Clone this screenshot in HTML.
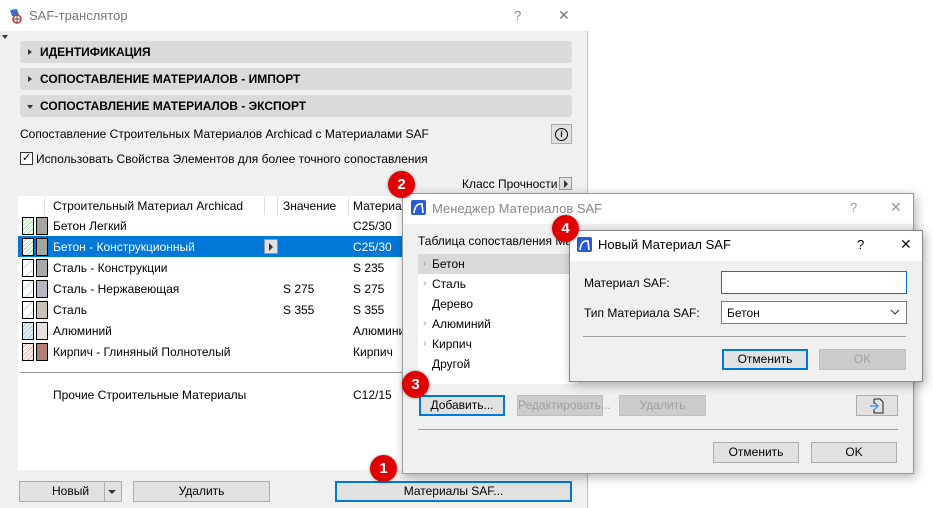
<!DOCTYPE html>
<html><head><meta charset="utf-8">
<style>
*{box-sizing:border-box;margin:0;padding:0}
body{width:933px;height:508px;overflow:hidden;background:#fff;font-family:"Liberation Sans","DejaVu Sans",sans-serif;font-size:12px;color:#000;position:relative}
.a{position:absolute;white-space:nowrap}
.btn{position:absolute;height:21px;background:#e1e1e1;border:1px solid #adadad;text-align:center;line-height:19px;font-size:12px}
.dis{color:#a0a0a0;background:#cccccc;border-color:#bfbfbf}
.blue{border:2px solid #0078d7;line-height:17px}
.sec{position:absolute;left:20px;width:552px;height:22px;background:#dadada;border-radius:3px;font-weight:bold;line-height:22px;padding-left:20px;font-size:12px}
.sec i{position:absolute;left:8px;top:8px;width:0;height:0;border-left:4px solid #333;border-top:3px solid transparent;border-bottom:3px solid transparent}
.sec i.d{left:7px;top:10px;border-top:4px solid #333;border-left:3px solid transparent;border-right:3px solid transparent;border-bottom:0}
.sw1{position:absolute;left:22px;width:12px;height:18px;border:1px solid #000}
.sw2{position:absolute;left:36px;width:12px;height:18px;border:1px solid #000}
.num{position:absolute;width:27px;height:27px;border-radius:50%;background:#e00000;color:#fff;font-weight:bold;font-size:15px;text-align:center;line-height:27px;box-shadow:0 0 3px rgba(0,0,0,.4)}
.li{position:absolute;left:432px}
.chev{position:absolute;left:423px;color:#999;font-size:10px}
.x{position:absolute;font-size:14px;color:#777}
</style></head><body>
<div class="a" style="left:0;top:0;width:588px;height:508px;background:#f0f0f0;border-right:1px solid #bdbdbd"></div>
<div class="a" style="left:0;top:0;width:588px;height:31px;background:#fff"></div>
<svg class="a" style="left:7px;top:7px" width="18" height="18" viewBox="0 0 18 18"><path d="M3 3 L10 2 L12 8 L5 9Z" fill="#3a6fc9"/><circle cx="10" cy="12" r="4" fill="none" stroke="#c33" stroke-width="1.5"/><path d="M6 12h8M10 8v8" stroke="#555"/></svg>
<div class="a" style="left:29px;top:8px;font-size:13px;color:#777">SAF-транслятор</div>
<div class="a" style="left:514px;top:8px;font-size:13px;color:#888">?</div>
<div class="x" style="left:558px;top:7px">✕</div>
<div class="a" style="left:2px;top:35px;border-top:4px solid #333;border-left:3px solid transparent;border-right:3px solid transparent"></div>
<div class="sec" style="top:41px"><i></i>ИДЕНТИФИКАЦИЯ</div>
<div class="sec" style="top:68px"><i></i>СОПОСТАВЛЕНИЕ МАТЕРИАЛОВ - ИМПОРТ</div>
<div class="sec" style="top:95px"><i class="d"></i>СОПОСТАВЛЕНИЕ МАТЕРИАЛОВ - ЭКСПОРТ</div>
<div class="a" style="left:20px;top:127px">Сопоставление Строительных Материалов Archicad с Материалами SAF</div>
<div class="a" style="left:551px;top:124px;width:21px;height:20px;border:1px solid #adadad;background:#e1e1e1;text-align:center"><span style="display:inline-block;margin-top:3px;width:13px;height:13px;border:1px solid #000;border-radius:50%;font-size:9px;line-height:11px;font-weight:bold">i</span></div>
<div class="a" style="left:20px;top:152px;width:13px;height:13px;border:1px solid #333;background:#fff;font-size:11px;line-height:11px;text-align:center">✓</div>
<div class="a" style="left:36px;top:152px">Использовать Свойства Элементов для более точного сопоставления</div>
<div class="a" style="left:462px;top:177px">Класс Прочности</div>
<div class="a" style="left:559px;top:177px;width:13px;height:13px;border:1px solid #999;background:#e1e1e1"><div class="a" style="left:4px;top:2px;border-left:4px solid #333;border-top:4px solid transparent;border-bottom:4px solid transparent"></div></div>
<div class="a" style="left:18px;top:196px;width:390px;height:274px;background:#fff"></div>
<div class="a" style="left:44px;top:197px;width:1px;height:18px;background:#ddd"></div>
<div class="a" style="left:264px;top:197px;width:1px;height:18px;background:#ddd"></div>
<div class="a" style="left:277px;top:197px;width:1px;height:18px;background:#ddd"></div>
<div class="a" style="left:348px;top:197px;width:1px;height:18px;background:#ddd"></div>
<div class="a" style="left:53px;top:199px">Строительный Материал Archicad</div>
<div class="a" style="left:283px;top:199px">Значение</div>
<div class="a" style="left:353px;top:199px">Материал</div>
<div class="a" style="left:18px;top:236px;width:390px;height:21px;background:#0078d7"></div>
<div class="a" style="left:264px;top:239px;width:14px;height:15px;border:1px solid #999;background:#e1e1e1"><div class="a" style="left:4px;top:3px;border-left:4px solid #333;border-top:4px solid transparent;border-bottom:4px solid transparent"></div></div>

<div class="sw1" style="top:217px;background:repeating-linear-gradient(135deg,#fff 0 2px,#9d9 2px 3px)"></div><div class="sw2" style="top:217px;background:#a5a5a0"></div>
<div class="a" style="left:53px;top:219px">Бетон Легкий</div><div class="a" style="left:353px;top:219px">C25/30</div>
<div class="sw1" style="top:238px;background:repeating-linear-gradient(135deg,#fff 0 2px,#9d9 2px 3px)"></div><div class="sw2" style="top:238px;background:#a5a5a0"></div>
<div class="a" style="left:53px;top:240px;color:#fff">Бетон - Конструкционный</div><div class="a" style="left:353px;top:240px;color:#fff">C25/30</div>
<div class="sw1" style="top:259px;background:repeating-linear-gradient(135deg,#fff 0 6px,#bcdcf0 6px 7px)"></div><div class="sw2" style="top:259px;background:#a8a8a8"></div>
<div class="a" style="left:53px;top:261px">Сталь - Конструкции</div><div class="a" style="left:353px;top:261px">S 235</div>
<div class="sw1" style="top:280px;background:repeating-linear-gradient(135deg,#fff 0 6px,#bcdcf0 6px 7px)"></div><div class="sw2" style="top:280px;background:#b6b6c2"></div>
<div class="a" style="left:53px;top:282px">Сталь - Нержавеющая</div><div class="a" style="left:283px;top:282px">S 275</div><div class="a" style="left:353px;top:282px">S 275</div>
<div class="sw1" style="top:301px;background:repeating-linear-gradient(135deg,#fff 0 6px,#bcdcf0 6px 7px)"></div><div class="sw2" style="top:301px;background:#cac3b5"></div>
<div class="a" style="left:53px;top:303px">Сталь</div><div class="a" style="left:283px;top:303px">S 355</div><div class="a" style="left:353px;top:303px">S 355</div>
<div class="sw1" style="top:322px;background:repeating-linear-gradient(135deg,#e8eefa 0 2px,#9cd 2px 3px)"></div><div class="sw2" style="top:322px;background:#e6e0e0"></div>
<div class="a" style="left:53px;top:324px">Алюминий</div><div class="a" style="left:353px;top:324px">Алюмини</div>
<div class="sw1" style="top:343px;background:repeating-linear-gradient(135deg,#fff 0 2px,#f2a0a0 2px 3px)"></div><div class="sw2" style="top:343px;background:#b08070"></div>
<div class="a" style="left:53px;top:345px">Кирпич - Глиняный Полнотелый</div><div class="a" style="left:353px;top:345px">Кирпич</div>
<div class="a" style="left:20px;top:372px;width:390px;height:1px;background:#999"></div>
<div class="a" style="left:53px;top:388px">Прочие Строительные Материалы</div><div class="a" style="left:353px;top:388px">C12/15</div>
<div class="btn" style="left:19px;top:481px;width:103px;text-align:left;padding-left:32px">Новый<span class="a" style="left:84px;top:0;width:1px;height:19px;background:#adadad"></span><span class="a" style="left:88px;top:8px;border-top:4px solid #333;border-left:4px solid transparent;border-right:4px solid transparent"></span></div>
<div class="btn" style="left:133px;top:481px;width:137px">Удалить</div>
<div class="btn blue" style="left:335px;top:481px;width:237px">Материалы SAF...</div>

<div class="a" style="left:402px;top:193px;width:512px;height:281px;background:#f0f0f0;border:1px solid #999;box-shadow:2px 3px 10px rgba(0,0,0,.3)"></div>
<div class="a" style="left:403px;top:194px;width:510px;height:30px;background:#fff"></div>
<svg class="a" style="left:411px;top:200px" width="15" height="15" viewBox="0 0 15 15"><rect width="15" height="15" rx="2" fill="#2a5bd7"/><path d="M3 13 Q4 3 11 4 L12 13" fill="none" stroke="#fff" stroke-width="1.6"/></svg>
<div class="a" style="left:432px;top:201px;font-size:13px;color:#888">Менеджер Материалов SAF</div>
<div class="a" style="left:850px;top:200px;font-size:13px;color:#999">?</div>
<div class="x" style="left:890px;top:199px;color:#999">✕</div>
<div class="a" style="left:418px;top:234px">Таблица сопоставления Ма</div>
<div class="a" style="left:418px;top:254px;width:160px;height:130px;background:#fff"></div>
<div class="a" style="left:418px;top:254px;width:160px;height:20px;background:#d9d9d9"></div>
<span class="chev" style="top:258px">›</span><div class="li" style="top:257px">Бетон</div>
<span class="chev" style="top:278px">›</span><div class="li" style="top:277px">Сталь</div>
<div class="li" style="top:297px">Дерево</div>
<span class="chev" style="top:318px">›</span><div class="li" style="top:317px">Алюминий</div>
<span class="chev" style="top:338px">›</span><div class="li" style="top:337px">Кирпич</div>
<div class="li" style="top:357px">Другой</div>
<div class="btn blue" style="left:419px;top:395px;width:86px">Добавить...</div>
<div class="btn dis" style="left:517px;top:395px;width:86px">Редактировать...</div>
<div class="btn dis" style="left:619px;top:395px;width:87px">Удалить</div>
<div class="btn" style="left:856px;top:395px;width:42px"><svg style="margin-top:2px" width="16" height="16" viewBox="0 0 16 16"><path d="M5 1h6l3 3v11H5v-4M5 6V1" fill="none" stroke="#222"/><path d="M1 8h8M6 5l3 3-3 3" fill="none" stroke="#3a8ee6" stroke-width="1.3"/></svg></div>
<div class="a" style="left:418px;top:429px;width:480px;height:1px;background:#a0a0a0"></div>
<div class="btn" style="left:713px;top:442px;width:86px">Отменить</div>
<div class="btn" style="left:811px;top:442px;width:86px">OK</div>

<div class="a" style="left:569px;top:230px;width:354px;height:152px;background:#f0f0f0;border:1px solid #888;box-shadow:2px 3px 10px rgba(0,0,0,.3)"></div>
<div class="a" style="left:570px;top:231px;width:352px;height:30px;background:#fff"></div>
<svg class="a" style="left:577px;top:237px" width="15" height="15" viewBox="0 0 15 15"><rect width="15" height="15" rx="2" fill="#2a5bd7"/><path d="M3 13 Q4 3 11 4 L12 13" fill="none" stroke="#fff" stroke-width="1.6"/></svg>
<div class="a" style="left:598px;top:237px;font-size:13px">Новый Материал SAF</div>
<div class="a" style="left:857px;top:237px;font-size:13px">?</div>
<div class="x" style="left:900px;top:236px;color:#111">✕</div>
<div class="a" style="left:584px;top:276px">Материал SAF:</div>
<div class="a" style="left:721px;top:271px;width:186px;height:23px;background:#fff;border:1px solid #0078d7"></div>
<div class="a" style="left:584px;top:306px">Тип Материала SAF:</div>
<div class="a" style="left:721px;top:301px;width:186px;height:23px;background:#fff;border:1px solid #7a7a7a;padding:4px 0 0 5px">Бетон<svg class="a" style="left:168px;top:7px" width="10" height="7"><path d="M1 1l4 4 4-4" fill="none" stroke="#333"/></svg></div>
<div class="a" style="left:583px;top:336px;width:323px;height:1px;background:#a0a0a0"></div>
<div class="btn blue" style="left:722px;top:349px;width:86px">Отменить</div>
<div class="btn dis" style="left:819px;top:349px;width:87px">OK</div>

<div class="num" style="left:370px;top:455px">1</div>
<div class="num" style="left:388px;top:171px">2</div>
<div class="num" style="left:402px;top:371px">3</div>
<div class="num" style="left:552px;top:215px">4</div>
</body></html>
